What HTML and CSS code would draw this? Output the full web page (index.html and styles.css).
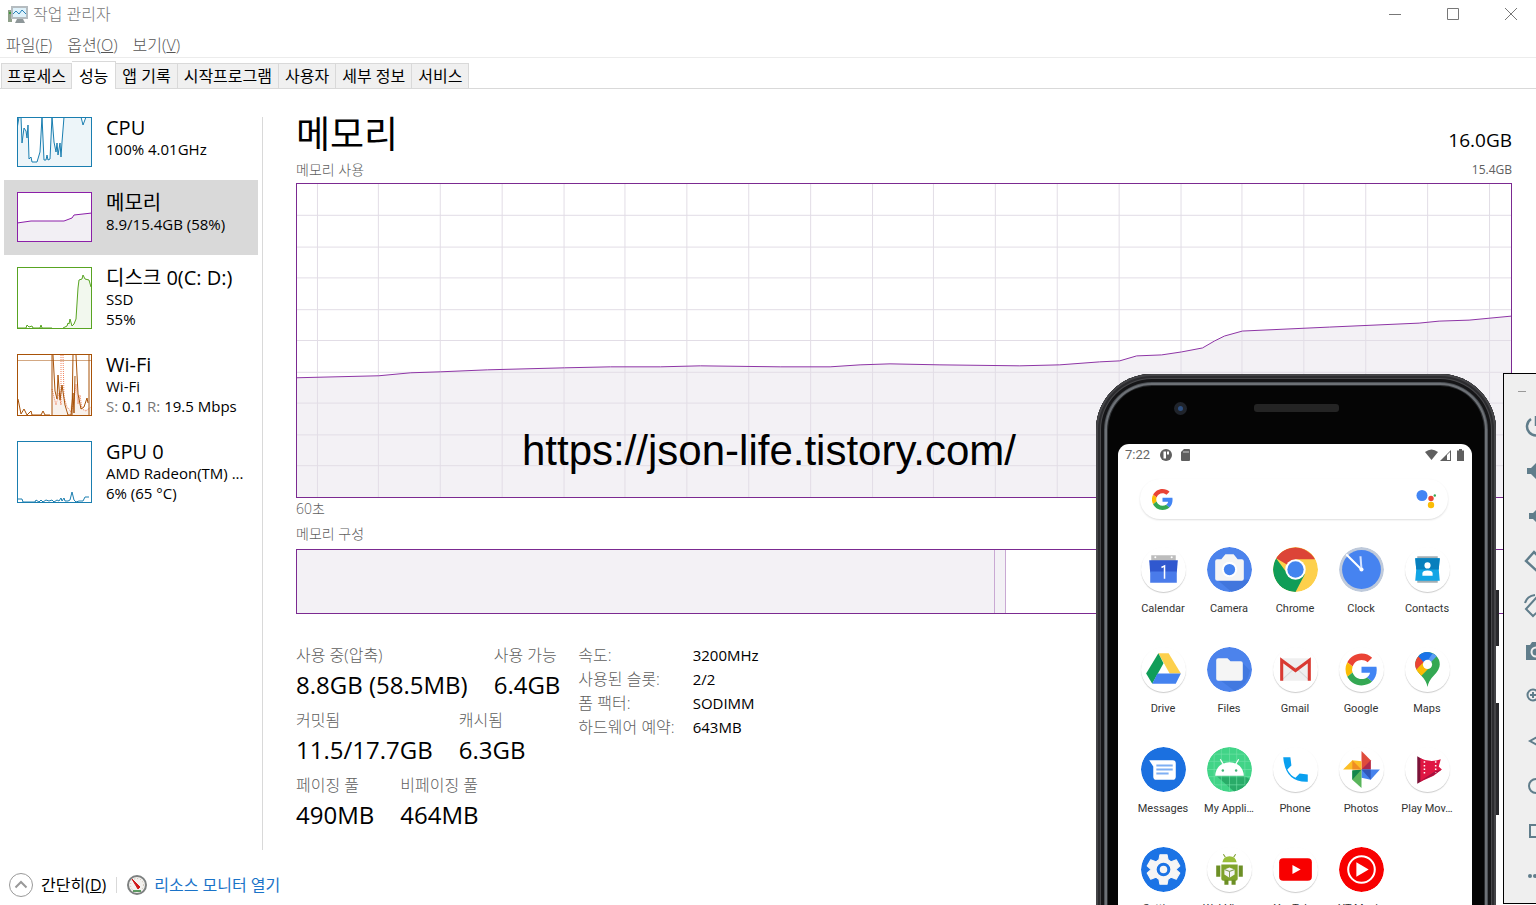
FILE: index.html
```html
<!DOCTYPE html>
<html lang="ko">
<head>
    <meta charset="utf-8">
    <meta name="viewport" content="width=device-width, initial-scale=1">
    <title>작업 관리자</title>
    <link rel="stylesheet" href="styles.css">
</head>
<body>
<div class="desktop">

    <!-- Title bar -->
    <header class="titlebar">
        <svg class="app-icon" viewBox="0 0 20 17">
            <rect x="0" y="4" width="4" height="12" fill="#8fa08a"/>
            <rect x="1" y="6" width="2" height="2" fill="#3f9b3a"/>
            <rect x="3" y="0" width="17" height="13" fill="#b5bcc0"/>
            <rect x="5" y="2" width="13" height="9" fill="#dff2fb"/>
            <path d="M5 8l3-3 3 3 3-4 4 4" fill="none" stroke="#2b83b8"/>
            <path d="M9 13h6l2 4H7z" fill="#8e9799"/>
        </svg>
        <span class="window-title">작업 관리자</span>
        <div class="window-controls">
            <button type="button" aria-label="최소화"><svg viewBox="0 0 14 14"><path d="M1 7.500h12"/></svg></button>
            <button type="button" aria-label="최대화"><svg viewBox="0 0 14 14"><path d="M1.500 1.500h11v11h-11z"/></svg></button>
            <button type="button" aria-label="닫기"><svg viewBox="0 0 14 14"><path d="M1 1l12 12M13 1L1 13"/></svg></button>
        </div>
    </header>

    <nav class="menubar">
        <button type="button">파일(<u>F</u>)</button>
        <button type="button">옵션(<u>O</u>)</button>
        <button type="button">보기(<u>V</u>)</button>
    </nav>

    <div class="tabs" role="tablist">
        <button type="button" role="tab">프로세스</button>
        <button type="button" role="tab" class="active" aria-selected="true">성능</button>
        <button type="button" role="tab">앱 기록</button>
        <button type="button" role="tab">시작프로그램</button>
        <button type="button" role="tab">사용자</button>
        <button type="button" role="tab">세부 정보</button>
        <button type="button" role="tab">서비스</button>
    </div>

    <div class="content">
        <!-- Resource list -->
        <aside class="resources">
            <button type="button" class="resource">
                <svg class="thumb cpu" viewBox="0 0 75 50">
                    <path class="area" d="M0 12L2 0H4L5 26 7 11 9 14 10 21 11 8 12 42 14 40 15 45H20L23 35 25 0 27 43H29L30 38 31 43 33 42 35 0 37 25 39 35 40 26 41 38 43 26 44 40 45 25 47 0H64L66 8 69 0H75V50H0z"/>
                    <path class="line" d="M0 12L2 0H4L5 26 7 11 9 14 10 21 11 8 12 42 14 40 15 45H20L23 35 25 0 27 43H29L30 38 31 43 33 42 35 0 37 25 39 35 40 26 41 38 43 26 44 40 45 25 47 0H64L66 8 69 0H75"/>
                    <rect class="frame" x=".5" y=".5" width="74" height="49"/>
                </svg>
                <span class="info"><strong>CPU</strong><span>100% 4.01GHz</span></span>
            </button>
            <button type="button" class="resource selected">
                <svg class="thumb memory" viewBox="0 0 75 50">
                    <rect width="75" height="50" fill="#fff"/>
                    <path class="area" d="M0 31l14-2h33l8-3 2-3 9-1 9-1v29H0z"/>
                    <path class="line" d="M0 31l14-2h33l8-3 2-3 9-1 9-1"/>
                    <rect class="frame" x=".5" y=".5" width="74" height="49"/>
                </svg>
                <span class="info"><strong>메모리</strong><span>8.9/15.4GB (58%)</span></span>
            </button>
            <button type="button" class="resource">
                <svg class="thumb disk" viewBox="0 0 75 62">
                    <path class="area" d="M46 61l4-2 3-7 2 7 4-7 2-31 1-8 3-1 1-4 2 4 4 1 3 12v36z"/>
                    <path class="line" d="M0 61h9l1-3 2 2 3-1 1 2h7l1-3 1 3h10M46 61l4-2 1-3 1 1 1-5 2 7 2-2 2-5 2-31 1-8 3-1 1-4 2 4 4 1 2 7"/>
                    <rect class="frame" x=".5" y=".5" width="74" height="61"/>
                </svg>
                <span class="info"><strong>디스크 0(C: D:)</strong><span>SSD</span><span>55%</span></span>
            </button>
            <button type="button" class="resource">
                <svg class="thumb wifi" viewBox="0 0 75 62">
                    <path class="area" d="M35 61V35l5 15 4-20 6 30 6-14 5-6 5 16 8-2v7z"/>
                    <path class="pale" d="M0 6.500h75"/>
                    <path class="dots" d="M35 35l4 16 3-12 2 12V1M46 1l1 42 3 10 4 5 3-10 2-18 2 20 2-9 2 14 4 2 5-4"/>
                    <path class="line" d="M1 45l3 15 3-5 3 6 4-4 1 4h9l2-4 2 4h5M35 61V1M36 1l2 36 2 8 1-24 2 25 2-15 3 20 3 10h3l2-22 1 20 1-37M55 61l1-60M59 1l2 39 3 15 3-2 3-9 1 5M72 61V1"/>
                    <rect class="frame" x=".5" y=".5" width="74" height="61"/>
                </svg>
                <span class="info"><strong>Wi-Fi</strong><span>Wi-Fi</span><span><i>S:</i> 0.1 <i>R:</i> 19.5 Mbps</span></span>
            </button>
            <button type="button" class="resource">
                <svg class="thumb gpu" viewBox="0 0 75 62">
                    <path class="line" d="M0 58h5l1 3h12l1-2 3 2 2-2 2 2 3-2 3 1 3-1 2 2 3-2 2 1 2-3 1 3 2-3 1 3h3l2-1 2-8 2 8 2 2 3-1h4l2-4h4"/>
                    <rect class="frame" x=".5" y=".5" width="74" height="61"/>
                </svg>
                <span class="info"><strong>GPU 0</strong><span>AMD Radeon(TM) ...</span><span>6% (65 °C)</span></span>
            </button>
        </aside>

        <div class="divider"></div>

        <!-- Memory details -->
        <main class="details">
            <div class="heading">
                <h1>메모리</h1>
                <span class="total">16.0GB</span>
            </div>
            <div class="caption"><span>메모리 사용</span><span class="limit">15.4GB</span></div>

            <div class="usage">
                <svg class="chart" viewBox="0 0 1216 315" preserveAspectRatio="none">
                    <path class="area" d="M0 195L82 193l32-3 30-1 47-2 77-2 46-1h50l40-1 80 1h50l30-2 30-1 50 1 80 1 40-1 40-3 20-1 17-5 25-1 20-3 21-4 12-7 10-5 18-5 87-4 90-4 20-2 30-1 42-4V315H0z"/>
                    <path class="grid" d="M20.500 0v315M81.500 0v315M143.500 0v315M205.500 0v315M267.500 0v315M328.500 0v315M390.500 0v315M452.500 0v315M514.500 0v315M576.500 0v315M637.500 0v315M699.500 0v315M761.500 0v315M823.500 0v315M885.500 0v315M946.500 0v315M1008.500 0v315M1070.500 0v315M1132.500 0v315M1194.500 0v315"/>
                    <path class="grid" d="M0 31.500h1216M0 63.500h1216M0 94.500h1216M0 126.500h1216M0 157.500h1216M0 189.500h1216M0 220.500h1216M0 252.500h1216M0 283.500h1216"/>
                    <path class="line" d="M0 195L82 193l32-3 30-1 47-2 77-2 46-1h50l40-1 80 1h50l30-2 30-1 50 1 80 1 40-1 40-3 20-1 17-5 25-1 20-3 21-4 12-7 10-5 18-5 87-4 90-4 20-2 30-1 42-4"/>
                </svg>
                <span class="watermark">https://json-life.tistory.com/</span>
            </div>
            <div class="caption axis"><span>60초</span></div>

            <div class="caption"><span>메모리 구성</span></div>
            <div class="composition">
                <div class="in-use" style="width: 57.5%"></div>
                <div class="modified" style="width: 0.9%"></div>
            </div>

            <div class="summary">
                <div class="stats">
                    <dl>
                        <div><dt>사용 중(압축)</dt><dd>8.8GB (58.5MB)</dd></div>
                        <div><dt>사용 가능</dt><dd>6.4GB</dd></div>
                    </dl>
                    <dl>
                        <div><dt>커밋됨</dt><dd>11.5/17.7GB</dd></div>
                        <div><dt>캐시됨</dt><dd>6.3GB</dd></div>
                    </dl>
                    <dl>
                        <div><dt>페이징 풀</dt><dd>490MB</dd></div>
                        <div><dt>비페이징 풀</dt><dd>464MB</dd></div>
                    </dl>
                </div>
                <table class="hardware">
                    <tr><th scope="row">속도:</th><td>3200MHz</td></tr>
                    <tr><th scope="row">사용된 슬롯:</th><td>2/2</td></tr>
                    <tr><th scope="row">폼 팩터:</th><td>SODIMM</td></tr>
                    <tr><th scope="row">하드웨어 예약:</th><td>643MB</td></tr>
                </table>
            </div>
        </main>
    </div>

    <footer class="footer">
        <button type="button" class="fewer">
            <svg viewBox="0 0 24 24"><circle cx="12" cy="12" r="11.500"/><path d="M6.500 14.500L12 9l5.500 5.500" stroke-width="2"/></svg>
            <span>간단히(<u>D</u>)</span>
        </button>
        <span class="separator"></span>
        <a class="monitor" href="#">
            <svg viewBox="0 0 20 20">
                <circle cx="10" cy="10" r="9" fill="#f3f1ee" stroke="#7d8080" stroke-width="2"/>
                <circle cx="10" cy="10" r="6.500" fill="none" stroke="#c3b8a8" stroke-dasharray="1 2"/>
                <path d="M5 4l8 8-2 2z" fill="#d01818" stroke="#d01818"/>
                <path d="M6 16h8" stroke="#5c9a62" stroke-width="2"/>
            </svg>
            <span>리소스 모니터 열기</span>
        </a>
    </footer>

    <!-- Emulator window -->
    <div class="phone">
        <div class="side-key power-key"></div>
        <div class="side-key volume-key"></div>
        <div class="phone-body">
            <div class="phone-top">
                <span class="lens"></span>
                <span class="speaker"></span>
            </div>
            <div class="screen">
                <div class="status">
                    <span>7:22</span>
                    <svg class="status-icon" viewBox="0 0 12 12"><circle cx="6" cy="6" r="6"/><path d="M3.500 2.500H6v7H3.500zM7 2.500h2v3H7z" fill="#fff"/></svg>
                    <svg class="status-icon sd" viewBox="0 0 12 12"><path d="M5 0h5q1 0 1 1v10q0 1-1 1H3q-1 0-1-1V3z"/><path d="M5 2v2M7 2v2M9 2v2" stroke="#fff" stroke-width=".7"/></svg>
                    <svg class="status-right" viewBox="0 0 40 12">
                        <path d="M0 3q6.500-5 13 0L6.500 11z"/>
                        <path d="M15 12L26 1v11z"/><path d="M22 6l3-3v8h-3z" fill="#fff"/>
                        <path d="M34 0h3v1.500h2V12h-7V1.500h2z"/>
                    </svg>
                </div>

                <div class="search">
                    <svg class="google-mark" viewBox="0 0 48 48">
                        <path fill="#ea4335" d="M24 9.500c3.500 0 6.700 1.200 9.200 3.600l6.900-6.900C35.900 2.400 30.500 0 24 0 14.600 0 6.500 5.400 2.600 13.200l8 6.200C12.400 13.700 17.700 9.500 24 9.500z"/>
                        <path fill="#4285f4" d="M47 24.600c0-1.600-.2-3.100-.4-4.600H24v9h12.900c-.6 3-2.300 5.500-4.800 7.200l7.700 6C44.400 38 47 32 47 24.600z"/>
                        <path fill="#fbbc05" d="M10.500 28.600a14.500 14.500 0 010-9.200l-8-6.200a24 24 0 000 21.600z"/>
                        <path fill="#34a853" d="M24 48c6.500 0 11.900-2.100 15.900-5.800l-7.700-6c-2.200 1.500-4.900 2.300-8.200 2.300-6.300 0-11.600-4.200-13.500-9.900l-8 6.200C6.500 42.600 14.600 48 24 48z"/>
                    </svg>
                    <svg class="assistant" viewBox="0 0 20 20">
                        <circle cx="6" cy="6.500" r="5.500" fill="#4285f4"/>
                        <circle cx="15" cy="9.500" r="2.700" fill="#ea4335"/>
                        <circle cx="15" cy="16" r="3.200" fill="#fbbc05"/>
                        <circle cx="18.800" cy="6.500" r="1.200" fill="#34a853"/>
                    </svg>
                </div>

                <div class="apps">
                    <button type="button">
                        <svg class="plain" viewBox="0 0 44 44"><path d="M10 8h24v6H10z" fill="#bdbdbd"/><circle cx="14" cy="10" r="1" fill="#fff"/><circle cx="30" cy="10" r="1" fill="#fff"/><path d="M8 13h28l-1 12H9z" fill="#3058cf"/><path d="M9 24h26v11H9z" fill="#4a7bea"/><path d="M20 20l3-1.500V31" fill="none" stroke="#fff" stroke-width="1.500"/></svg>
                        <span>Calendar</span>
                    </button>
                    <button type="button">
                        <svg viewBox="0 0 44 44"><circle cx="22" cy="22" r="22" fill="#4c83ec"/><path d="M36 32H10l14 12q12-2 18-12z" fill="#4176dd"/><path d="M10 12h4l4-5h8l4 5h4q2 0 2 2v17q0 2-2 2H10q-2 0-2-2V14q0-2 2-2z" fill="#f5f5f5"/><circle cx="22" cy="22" r="7.500" fill="#fff"/><circle cx="22" cy="22" r="5.500" fill="#4482ef"/></svg>
                        <span>Camera</span>
                    </button>
                    <button type="button">
                        <svg viewBox="0 0 44 44"><circle cx="22" cy="22" r="22" fill="#fdd04c"/><path d="M22 22L3 11A22 22 0 0141 12H22z" fill="#dc4437"/><path d="M3 11A22 22 0 0022 44l9-17-9-5-8 4z" fill="#109d58"/><circle cx="22" cy="22" r="10" fill="#fff"/><circle cx="22" cy="22" r="8" fill="#4485ef"/></svg>
                        <span>Chrome</span>
                    </button>
                    <button type="button">
                        <svg viewBox="0 0 44 44"><circle cx="22" cy="22" r="22" fill="#bfcadb"/><circle cx="22" cy="22" r="19" fill="#4683f0"/><path d="M22 22L7 7" stroke="#fff" stroke-width="2"/><path d="M22 22L21 9" stroke="#d5e3ff" stroke-width="2"/><circle cx="22" cy="22" r="2" fill="#fff"/></svg>
                        <span>Clock</span>
                    </button>
                    <button type="button">
                        <svg class="plain" viewBox="0 0 44 44"><path d="M12 9h20v26H12z" fill="#a3aeb3"/><path d="M10 11h24l-1 11 1 11H10l1-11z" fill="#12a5e5"/><path d="M10 11h24l-1 11H11z" fill="#087fbd"/><circle cx="22" cy="18" r="3" fill="#fff"/><path d="M17 28v-2q0-3 5-3t5 3v2z" fill="#fff"/></svg>
                        <span>Contacts</span>
                    </button>

                    <button type="button">
                        <svg class="plain" viewBox="0 0 44 44"><path d="M17 6h10l12 20H28z" fill="#fdd04c"/><path d="M17 6l5 10-11 20-6-10z" fill="#109d58"/><path d="M16 26h23l-5 10H11z" fill="#4482ef"/></svg>
                        <span>Drive</span>
                    </button>
                    <button type="button">
                        <svg viewBox="0 0 44 44"><circle cx="22" cy="22" r="22" fill="#4c83ec"/><path d="M33 14l9 9q-2 14-15 20L11 31z" fill="#4279e0"/><path d="M11 11h9l3 3h10q2 0 2 2v15q0 2-2 2H11q-2 0-2-2V13q0-2 2-2z" fill="#f5f5f5"/></svg>
                        <span>Files</span>
                    </button>
                    <button type="button">
                        <svg class="plain" viewBox="0 0 44 44"><path d="M8 11h28v22H8z" fill="#efefef"/><path d="M9 32l13-12 13 12" fill="none" stroke="#d7d7d7"/><path d="M8.500 33V13L22 23l13.500-10v20" fill="none" stroke="#d93a32" stroke-width="3"/></svg>
                        <span>Gmail</span>
                    </button>
                    <button type="button">
                        <svg class="plain" viewBox="-10 -10 68 68"><path fill="#ea4335" d="M24 9.500c3.500 0 6.700 1.200 9.200 3.600l6.900-6.900C35.900 2.400 30.500 0 24 0 14.600 0 6.500 5.400 2.600 13.200l8 6.200C12.400 13.700 17.700 9.500 24 9.500z"/><path fill="#4285f4" d="M47 24.600c0-1.600-.2-3.100-.4-4.600H24v9h12.900c-.6 3-2.300 5.500-4.800 7.200l7.700 6C44.400 38 47 32 47 24.600z"/><path fill="#fbbc05" d="M10.500 28.600a14.500 14.500 0 010-9.200l-8-6.200a24 24 0 000 21.600z"/><path fill="#34a853" d="M24 48c6.500 0 11.900-2.100 15.900-5.800l-7.700-6c-2.200 1.500-4.900 2.300-8.200 2.300-6.300 0-11.600-4.200-13.500-9.900l-8 6.200C6.500 42.600 14.600 48 24 48z"/></svg>
                        <span>Google</span>
                    </button>
                    <button type="button">
                        <svg class="plain" viewBox="0 0 44 44"><path d="M22 39q-1-6-6-11-6-6-6-11a12 12 0 0124 0q0 5-6 11-5 5-6 11z" fill="#34a853"/><path d="M11 22l8-9 6 6-9 9q-4-4-5-6z" fill="#fbbc05"/><path d="M13 9l6 5-8 8q-3-7 2-13z" fill="#ea4335"/><path d="M13 9q8-8 17 0l-9 9z" fill="#1a73e8"/><path d="M31 9l-8 8-2-2 6-9q2 1 4 3z" fill="#5b9cf2"/><circle cx="22" cy="17" r="4.500" fill="#fff"/></svg>
                        <span>Maps</span>
                    </button>

                    <button type="button">
                        <svg viewBox="0 0 44 44"><circle cx="22" cy="22" r="22" fill="#1b70e0"/><path d="M8 13h23q3 0 3 3v13q0 3-3 3H15q-3 0-3-3V19z" fill="#fff"/><path d="M15 18h16M15 22h16M15 26h12" stroke="#7eaff4" stroke-width="2"/></svg>
                        <span>Messages</span>
                    </button>
                    <button type="button">
                        <svg viewBox="0 0 44 44"><circle cx="22" cy="22" r="22" fill="#41d487"/><path d="M36 28l7 4q-5 10-16 12L9 28z" fill="#29ab68"/><path d="M7 7v30M14 2v40M22 0v44M29 1v42M37 7v30M7 7h30M2 14h40M0 22h44M1 29h42M7 37h30" stroke="#73e2a8" stroke-width=".6"/><path d="M8 28q1-12 14-13 13 1 14 13z" fill="#fff"/><path d="M13 12l3 5M31 12l-3 5" stroke="#fff" stroke-width="1.200"/><circle cx="15.500" cy="23" r="1.200" fill="#41b377"/><circle cx="28.500" cy="23" r="1.200" fill="#41b377"/></svg>
                        <span>My Appli…</span>
                    </button>
                    <button type="button">
                        <svg class="plain" viewBox="0 0 44 44"><path d="M10 10h7l1 8-4 4q3 6 8 8l4-4 8 1v7Q12 35 10 10z" fill="#0aa0ef"/></svg>
                        <span>Phone</span>
                    </button>
                    <button type="button">
                        <svg class="plain" viewBox="0 0 44 44"><path d="M22 4l9 9v9h-9z" fill="#df4b3c"/><path d="M22 22l9-9v9z" fill="#ad2a4e"/><path d="M40 22l-9 10-9-2v-8z" fill="#4683ed"/><path d="M22 22h9v10z" fill="#3158b9"/><path d="M22 40l-9-8v-9l9-1z" fill="#59b55b"/><path d="M22 22l-9 10v-9z" fill="#13864a"/><path d="M4 22l9-9 9 1v8z" fill="#fcbf26"/><path d="M22 22l-9-9v9z" fill="#ef8d23"/></svg>
                        <span>Photos</span>
                    </button>
                    <button type="button">
                        <svg class="plain" viewBox="0 0 44 44"><path d="M12 9l5 3v21l-5 3z" fill="#7b1238"/><path d="M15 11q10 5 20 1l-2 7 3 3-8 6-13 6z" fill="#df1642"/><path d="M14 34l15-10 7-2-9 6z" fill="#a5123f"/><path d="M19 14v14M30 14v11" stroke="#fff" stroke-width="1.500" stroke-dasharray="1.500 2"/></svg>
                        <span>Play Mov…</span>
                    </button>

                    <button type="button">
                        <svg viewBox="0 0 44 44"><circle cx="22" cy="22" r="22" fill="#1b73e5"/><path d="M18.500 7.500h7l1 5 3 2 5-2 3.500 6-4 3.500 4 3.500-3.500 6-5-2-3 2-1 5h-7l-1-5-3-2-5 2-3.500-6 4-3.500-4-3.500 3.500-6 5 2 3-2z" fill="#f5f5f5" stroke="#f5f5f5" stroke-linejoin="round"/><circle cx="22" cy="22" r="5.200" fill="#f5f5f5" stroke="#1b73e5" stroke-width="3"/></svg>
                        <span>Settings</span>
                    </button>
                    <button type="button">
                        <svg class="plain" viewBox="0 0 44 44"><path d="M15 15q1-6 7-6t7 6z" fill="#9abe3b"/><path d="M16 7l2 3M28 7l-2 3" stroke="#7a9b2c"/><path d="M14 17h16v14q0 2-2 2H16q-2 0-2-2z" fill="#7fa32b"/><path d="M9 18h4v11H9zM31 18h4v11h-4zM17 32h4v5h-4zM24 32h4v5h-4z" fill="#6c8f25"/><path d="M22 20l5 2v5l-5 3-5-3v-5z" fill="#f4f4f4"/><path d="M17 22l5 2 5-2M22 24v6" stroke="#829b52" fill="none"/></svg>
                        <span>WebView…</span>
                    </button>
                    <button type="button">
                        <svg class="plain" viewBox="0 0 44 44"><rect x="6" y="11" width="32" height="22" rx="4" fill="#f80000"/><path d="M19 17.500l8 4.500-8 4.500z" fill="#fff"/></svg>
                        <span>YouTube</span>
                    </button>
                    <button type="button">
                        <svg viewBox="0 0 44 44"><circle cx="22" cy="22" r="22" fill="#f80000"/><circle cx="22" cy="22" r="13" fill="none" stroke="#fff" stroke-width="2"/><path d="M17 15l12 7-12 7z" fill="#fff"/></svg>
                        <span>YT Music</span>
                    </button>
                </div>
            </div>
        </div>
    </div>

    <div class="emulator-tools">
        <button type="button" class="tool-minimize" aria-label="Minimize"><svg viewBox="0 0 8 8"><path d="M0 4.500h8"/></svg></button>
        <button type="button" aria-label="Power"><svg viewBox="0 0 24 24"><path d="M7 5a9 9 0 1010 0M12 2v10" stroke-width="2.500"/></svg></button>
        <button type="button" aria-label="Volume up"><svg viewBox="0 0 24 24"><path class="solid" d="M3 9h4l6-6v18l-6-6H3z"/></svg></button>
        <button type="button" aria-label="Volume down"><svg viewBox="0 0 24 24"><path class="solid" d="M5 9h4l6-6v18l-6-6H5z"/></svg></button>
        <button type="button" aria-label="Rotate left"><svg viewBox="0 0 24 24"><path d="M2 12l8-9 11 11-8 8z" stroke-width="2.500"/></svg></button>
        <button type="button" aria-label="Rotate right"><svg viewBox="0 0 24 24"><path d="M2 15L13 3l8 8-12 11zM1 9q2-7 10-8" stroke-width="2"/></svg></button>
        <button type="button" aria-label="Screenshot"><svg viewBox="0 0 24 24"><path class="solid" d="M2 6h4l2-3h8l2 3h4v15H2z"/><circle cx="12" cy="13" r="4.500" fill="#607d8b" stroke="#efefef" stroke-width="2"/></svg></button>
        <button type="button" aria-label="Zoom"><svg viewBox="0 0 24 24"><circle cx="9" cy="11" r="5.500"/><path d="M6 11h6M9 8v6M13 15l6 6"/></svg></button>
        <button type="button" aria-label="Back"><svg viewBox="0 0 24 24"><path d="M20 4L6 12l14 8z"/></svg></button>
        <button type="button" aria-label="Home"><svg viewBox="0 0 24 24"><circle cx="12" cy="12" r="7"/></svg></button>
        <button type="button" aria-label="Overview"><svg viewBox="0 0 24 24"><path d="M6 6h12v12H6z"/></svg></button>
        <button type="button" aria-label="More"><svg viewBox="0 0 24 24"><circle class="solid" cx="6" cy="12" r="2"/><circle class="solid" cx="11" cy="12" r="2"/><circle class="solid" cx="16" cy="12" r="2"/></svg></button>
    </div>

</div>
</body>
</html>
```
FILE: styles.css
```css
* {
    box-sizing: border-box;
}

body {
    margin: 0;
    background-color: #fff;
    color: #000;
    font-family: "Open Sans", "Noto Sans CJK KR", sans-serif;
    font-size: 16px;
    font-weight: 300;
}

button {
    margin: 0;
    padding: 0;
    border: none;
    background: none;
    color: inherit;
    font: inherit;
    text-align: left;
}

svg {
    display: block;
}

.desktop {
    position: relative;
    display: flex;
    flex-direction: column;
    min-height: 100vh;
    overflow: hidden;
}

/* Title bar and menu */
.titlebar {
    display: flex;
    align-items: center;
    height: 28px;
    padding-left: 8px;
    color: #777;
}

.app-icon {
    width: 20px;
    height: 17px;
}

.window-title {
    margin-left: 5px;
    line-height: 28px;
}

.window-controls {
    display: flex;
    gap: 8px;
    margin-left: auto;
}

.window-controls button {
    display: flex;
    align-items: center;
    justify-content: center;
    width: 50px;
    height: 28px;
}

.window-controls svg {
    width: 14px;
    height: 14px;
    fill: none;
    stroke: #777;
}

.menubar {
    display: flex;
    gap: 15px;
    height: 30px;
    padding: 4px 6px 0;
    border-bottom: 1px solid #ececec;
    color: #555;
    line-height: 24px;
}

/* Tabs */
.tabs {
    display: flex;
    align-items: flex-end;
    height: 31px;
    padding-left: 1px;
    border-bottom: 1px solid #d9d9d9;
    line-height: 24px;
}

.tabs button {
    height: 25px;
    padding: 0 6px;
    border: 1px solid #d9d9d9;
    border-width: 1px 1px 0 0;
    background-color: #f0f0f0;
    font-weight: 400;
}

.tabs button:first-child {
    border-left-width: 1px;
    padding: 0 5px;
}

.tabs .active {
    height: 28px;
    margin-bottom: -1px;
    padding: 0 7px;
    background-color: #fff;
}

/* Page body */
.content {
    display: grid;
    grid-template-columns: 262px 1px 1fr;
    flex: 1;
    padding-bottom: 15px;
}

.resources {
    padding: 16px 4px 0;
}

.resource {
    display: flex;
    gap: 14px;
    width: 100%;
    padding: 12px 13px 13px;
}

.resource.selected {
    background-color: #d9d9d9;
}

.thumb {
    flex: none;
    width: 75px;
}

.thumb .frame,
.thumb .line,
.thumb .pale,
.thumb .dots {
    fill: none;
    stroke: currentColor;
}

.thumb .area {
    fill: currentColor;
    fill-opacity: 0.08;
}

.thumb .pale {
    stroke-opacity: 0.5;
}

.thumb .dots {
    stroke: #f0805a;
    stroke-dasharray: 1 1;
}

.cpu, .gpu { color: #1a7eb0; }
.memory { color: #8b1fa8; }
.disk { color: #58a422; }
.wifi { color: #a85208; }
.thumb.memory .area { fill: #f2eff4; fill-opacity: 1; }

.info {
    display: flex;
    flex-direction: column;
    font-size: 15px;
    font-weight: 400;
    line-height: 20px;
    white-space: nowrap;
}

.info strong {
    font-size: 20px;
    font-weight: 400;
    line-height: 22px;
}

.info i {
    color: #777;
    font-style: normal;
}

.divider {
    margin-top: 28px;
    background-color: #d9d9d9;
}

/* Memory panel */
.details {
    padding: 21px 24px 0 33px;
}

.heading,
.caption {
    display: flex;
    justify-content: space-between;
}

.heading {
    align-items: flex-end;
    margin-bottom: 3px;
}

h1 {
    margin: 0;
    font-size: 37px;
    font-weight: 400;
    line-height: 48px;
}

.total {
    font-size: 19px;
    font-weight: 400;
    line-height: 36px;
}

.caption {
    color: #606060;
    font-size: 14px;
    line-height: 18px;
}

.caption .limit {
    font-size: 12px;
    font-weight: 400;
}

.axis {
    margin: 2px 0 7px;
}

.usage {
    position: relative;
    margin-top: 4px;
    border: 1px solid #7b2a91;
}

.chart {
    width: 100%;
    height: 313px;
}

.chart path {
    vector-effect: non-scaling-stroke;
}

.chart .area {
    fill: #f3f1f5;
}

.chart .grid {
    fill: none;
    stroke: #e2dde6;
}

.chart .line {
    fill: none;
    stroke: #8e35a6;
}

.watermark {
    position: absolute;
    right: 0;
    bottom: 20px;
    left: 0;
    margin-right: 270px;
    color: #000;
    font-family: "Liberation Sans", sans-serif;
    font-size: 42px;
    font-weight: 400;
    line-height: 52px;
    text-align: center;
}

.composition {
    display: flex;
    height: 65px;
    margin-top: 6px;
    border: 1px solid #7b2a91;
}

.in-use,
.modified {
    border-right: 1px solid #c9a9d3;
    background-color: #f3f1f5;
}

.summary {
    display: flex;
    gap: 18px;
    margin-top: 29px;
}

.stats {
    display: flex;
    flex-direction: column;
    gap: 5px;
}

dl {
    display: flex;
    gap: 26px;
    margin: 0;
}

dt {
    color: #606060;
    line-height: 24px;
}

dd {
    margin: 0;
    font-size: 24px;
    font-weight: 400;
    line-height: 36px;
}

.hardware {
    align-self: flex-start;
    border-collapse: collapse;
    line-height: 24px;
}

.hardware th {
    padding: 0 18px 0 0;
    color: #606060;
    font-weight: 300;
    text-align: left;
}

.hardware td {
    padding: 0;
    font-size: 15px;
    font-weight: 400;
}

/* Footer */
.footer {
    display: flex;
    align-items: center;
    height: 40px;
    padding-left: 9px;
}

.fewer,
.monitor {
    display: flex;
    align-items: center;
    line-height: 24px;
}

.fewer {
    gap: 8px;
    font-weight: 400;
}

.fewer svg {
    width: 24px;
    height: 24px;
    fill: none;
    stroke: #999;
}

.separator {
    width: 1px;
    height: 16px;
    margin: 0 10px;
    background-color: #d9d9d9;
}

.monitor {
    gap: 7px;
    color: #1a73c8;
    font-weight: 400;
    text-decoration: none;
}

.monitor svg {
    width: 20px;
    height: 20px;
}

/* Phone window lies over the task manager */
.phone {
    position: absolute;
    top: 374px;
    right: 40px;
    bottom: -20px;
    width: 400px;
    font-family: Roboto, sans-serif;
    font-weight: 400;
}

.phone-body {
    position: relative;
    height: 100%;
    padding: 0 24px 0 22px;
    overflow: hidden;
    border-radius: 56px 56px 0 0;
    background-color: #050505;
    box-shadow: inset 0 0 0 2px #444447, inset 0 0 0 4px #2c2c2f, inset 0 0 0 5px #48484b, inset 0 0 0 8px #151517, inset 0 0 0 9px #4c5055, inset 0 0 0 11px #6d7176, inset 0 0 0 12px #2a2c2f;
}

.side-key {
    position: absolute;
    right: -3px;
    width: 6px;
    background-color: #29292c;
}

.power-key {
    top: 216px;
    height: 56px;
}

.volume-key {
    top: 329px;
    height: 112px;
}

.phone-top {
    display: flex;
    align-items: center;
    height: 70px;
    padding: 0 0 2px 56px;
}

.lens {
    width: 13px;
    height: 13px;
    border: 4px solid #20242b;
    border-radius: 50%;
    background-color: #2d4f80;
}

.speaker {
    width: 85px;
    height: 8px;
    margin-left: 67px;
    border-radius: 3px;
    background-color: #242424;
}

.screen {
    height: 100%;
    border-radius: 11px 11px 0 0;
    background-color: #fff;
}

.status {
    display: flex;
    align-items: center;
    height: 21px;
    padding: 0 7px;
    color: #666;
    font-size: 13px;
}

.status svg {
    fill: #5f5f5f;
}

.status-icon {
    width: 12px;
    height: 12px;
    margin-left: 10px;
}

.status-icon.sd {
    margin-left: 7px;
}

.status-right {
    width: 40px;
    height: 12px;
    margin-left: auto;
}

.search {
    display: flex;
    align-items: center;
    justify-content: space-between;
    height: 40px;
    margin: 14px 24px 28px 22px;
    padding: 0 12px;
    border-radius: 20px;
    box-shadow: 0 1px 2px #ddd;
}

.google-mark {
    width: 21px;
    height: 21px;
}

.assistant {
    width: 20px;
    height: 20px;
}

.apps {
    display: grid;
    grid-template-columns: repeat(5, 1fr);
    row-gap: 30px;
    padding: 0 12px;
}

.apps button {
    display: flex;
    flex-direction: column;
    align-items: center;
    gap: 9px;
    color: #333;
    font-size: 11px;
    line-height: 16px;
    white-space: nowrap;
}

.apps svg {
    width: 45px;
    height: 45px;
    border-radius: 50%;
}

.apps .plain {
    background-color: #fff;
    box-shadow: 0 1px 1px #ccc;
}

/* Emulator toolbar, cut off by the right edge */
.emulator-tools {
    position: absolute;
    top: 373px;
    right: -22px;
    bottom: 1px;
    display: flex;
    flex-direction: column;
    width: 55px;
    border: 1px solid #000;
    background-color: #efefef;
}

.emulator-tools button {
    display: flex;
    align-items: center;
    height: 45px;
    padding-left: 20px;
}

.emulator-tools .tool-minimize {
    height: 29px;
    padding: 4px 0 0 14px;
}

.emulator-tools svg {
    width: 24px;
    height: 24px;
    fill: none;
    stroke: #607d8b;
    stroke-width: 2;
}

.emulator-tools .tool-minimize svg {
    width: 8px;
    height: 8px;
    stroke: #999;
    stroke-width: 1;
}

.emulator-tools .solid {
    fill: #607d8b;
    stroke: none;
}
```
